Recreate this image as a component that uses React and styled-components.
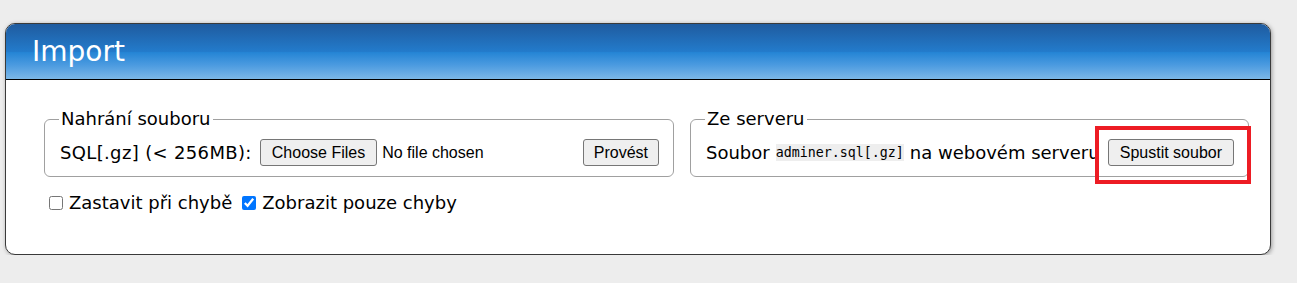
import styled, { createGlobalStyle } from "styled-components";

const GlobalStyle = createGlobalStyle`
  html, body {
    margin: 0;
    padding: 0;
    background: #ededed;
  }
  body {
    font-family: "DejaVu Sans", Verdana, sans-serif;
    font-size: 18px;
    color: #000;
  }
`;

const Page = styled.div`
  padding: 23px 26px 0 5px;
`;

const Panel = styled.div`
  background: #fff;
  border: 1px solid #3a3a3a;
  border-radius: 10px;
  box-shadow: 1px 1px 4px rgba(0, 0, 0, 0.35);
  overflow: hidden;
  height: 230px;
`;

const Header = styled.h2`
  margin: 0;
  height: 56px;
  box-sizing: border-box;
  padding: 0 0 0 26px;
  display: flex;
  align-items: center;
  font-weight: normal;
  font-size: 28px;
  color: #fff;
  border-bottom: 1px solid #000;
  background: linear-gradient(
    to bottom,
    #1f5b9f 0%,
    #237bcb 50%,
    #2585d5 52%,
    #4c9be0 75%,
    #7cb8e8 100%
  );
`;

const Body = styled.div`
  padding: 30px 0 0 38px;
`;

const Row = styled.div`
  display: flex;
  gap: 16px;
`;

const Fieldset = styled.fieldset`
  margin: 0;
  border: 1px solid #a0a0a0;
  border-radius: 6px;
  padding: 11px 14px 10px 15px;
  width: ${(p) => p.$width}px;
  box-sizing: border-box;
  display: flex;
  align-items: center;
  white-space: nowrap;
`;

const Legend = styled.legend`
  padding: 0 2px;
  margin-left: -1px;
  line-height: 18px;
`;

const Button = styled.button`
  font-family: "Liberation Sans", Arial, sans-serif;
  font-size: 16px;
  color: #000;
  background: #efefef;
  border: 1px solid #767676;
  border-radius: 3px;
  height: 27px;
  padding: 0 ${(p) => p.$pad || 10}px;
  margin: 0;
`;

const SubmitButton = styled(Button)`
  margin-left: auto;
`;

const Label = styled.span`
  letter-spacing: 0.35px;
`;

const FileInput = styled.span`
  display: inline-flex;
  align-items: center;
  margin-left: 8px;
  font-family: "Liberation Sans", Arial, sans-serif;
  font-size: 16px;
  gap: 5px;
`;

const Code = styled.code`
  font-family: "DejaVu Sans Mono", "Liberation Mono", monospace;
  font-size: 13.3px;
  background: #eee;
  line-height: 17px;
  margin: 0 6px;
`;

const Spacer = styled.span`
  margin-left: auto;
  position: relative;
  display: inline-flex;
`;

const Highlight = styled.span`
  position: absolute;
  top: -13px;
  left: -13px;
  right: -17px;
  bottom: -18px;
  border: 4px solid #ed1c24;
  pointer-events: none;
`;

const Options = styled.div`
  display: flex;
  align-items: center;
  padding: 15px 0 0 5px;
  gap: 10px;
`;

const Check = styled.label`
  display: inline-flex;
  align-items: center;
  gap: 6px;

  input {
    margin: 0;
    width: 14px;
    height: 14px;
  }
`;

export default function App() {
  return (
    <>
      <GlobalStyle />
      <Page>
        <Panel>
          <Header>Import</Header>
          <Body>
            <Row>
              <Fieldset $width={630}>
                <Legend>Nahrání souboru</Legend>
                <Label>SQL[.gz] (&lt; 256MB):</Label>
                <FileInput>
                  <Button $pad={11}>Choose Files</Button>
                  <span>No file chosen</span>
                </FileInput>
                <SubmitButton>Provést</SubmitButton>
              </Fieldset>
              <Fieldset $width={559}>
                <Legend>Ze serveru</Legend>
                Soubor<Code>adminer.sql[.gz]</Code>na webovém serveru
                <Spacer>
                  <Button $pad={11}>Spustit soubor</Button>
                  <Highlight />
                </Spacer>
              </Fieldset>
            </Row>
            <Options>
              <Check>
                <input type="checkbox" />
                Zastavit při chybě
              </Check>
              <Check>
                <input type="checkbox" defaultChecked />
                Zobrazit pouze chyby
              </Check>
            </Options>
          </Body>
        </Panel>
      </Page>
    </>
  );
}
